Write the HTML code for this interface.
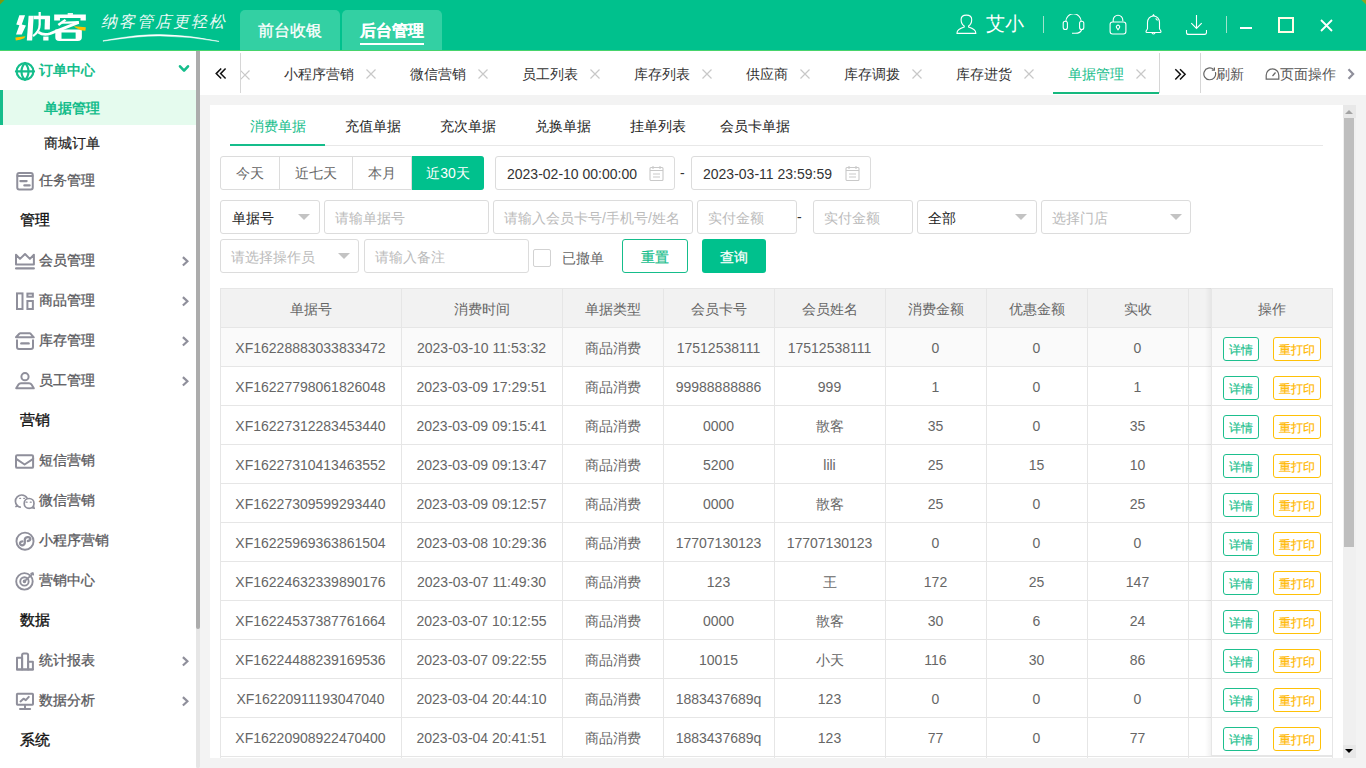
<!DOCTYPE html><html><head><meta charset="utf-8"><style>
*{margin:0;padding:0;box-sizing:border-box}
html,body{width:1366px;height:768px;overflow:hidden;background:#f3f3f3;font-family:"Liberation Sans",sans-serif;font-size:14px;color:#333}
.a{position:absolute}
.hdr{left:0;top:0;width:1366px;height:51px;background:#00C18D}
.hline{left:0;top:50px;width:1366px;height:1px;background:#48D46C}
.ttab{top:10px;height:40px;width:100px;background:#33D0A3;border-radius:5px 5px 0 0;color:#fff;font-size:16px;line-height:41px;text-align:center;-webkit-text-stroke:.3px #fff}
.side{left:0;top:51px;width:196px;height:717px;background:#fff}
.sbar{left:196px;top:51px;width:4px;height:717px;background:#e6e6e6;border-radius:2px}
.si{left:39px;font-size:14px;font-weight:500;-webkit-text-stroke:.3px currentColor;color:#5a5a5e;line-height:20px;height:20px}
.sh{left:20px;font-size:15px;font-weight:500;color:#111;-webkit-text-stroke:.35px #111;line-height:20px;height:20px}
.ico{left:15px;width:20px;height:20px}
.chev{left:180px;width:10px;height:12px}
.tabbar{left:200px;top:51px;width:1166px;height:44px;background:#fff}
.tt{top:63.5px;line-height:20px;font-size:14px;color:#333;white-space:nowrap}
.tx{top:69px;width:10px;height:10px}
.card{left:210px;top:105px;width:1133px;height:653px;background:#fff}
.st{top:116px;line-height:20px;font-size:14px;color:#333}
.inp{border:1px solid #dcdcdc;border-radius:3px;background:#fff;height:34px;line-height:34px;font-size:14px;color:#bbb;padding-left:10px;white-space:nowrap;overflow:hidden}
.caret{width:0;height:0;border-left:6px solid transparent;border-right:6px solid transparent;border-top:6px solid #c3c3c3}
.tbl{left:220px;top:288px;width:1113px;border-top:1px solid #e6e6e6}
.cell{height:39px;line-height:38px;text-align:center;font-size:14px;color:#666;border-right:1px solid #e6e6e6;border-bottom:1px solid #e6e6e6;white-space:nowrap;overflow:hidden}
.btn1{width:36px;height:24px;border:1px solid #1DBF8E;color:#1DBF8E;border-radius:3px;font-size:12px;line-height:24px;text-align:center;background:#fff;-webkit-text-stroke:.2px #1DBF8E}
.btn2{width:48px;height:24px;border:1px solid #FFC107;color:#FFB800;border-radius:3px;font-size:12px;line-height:24px;text-align:center;background:#fff;-webkit-text-stroke:.2px #FFB800}
</style></head><body>
<div class="a hdr"></div><div class="a hline"></div>
<svg class="a" style="left:10px;top:8px" width="85" height="38" viewBox="0 0 1366 611">
<g fill="#fff">
<polygon points="150,117 242,117 189,267 256,281 189,427 96,427 150,277 100,267"/>
<polygon points="299,124 381,124 356,523 270,523"/>
<polygon points="381,124 640,124 640,181 381,181"/>
<polygon points="562,131 644,131 640,345 555,345"/>
<polygon points="534,459 619,459 619,523 534,523"/>
<polygon points="927,82 1012,82 1012,110 927,110"/>
<polygon points="710,103 1219,103 1219,199 1133,199 1133,160 803,160 803,199 710,199"/>
<polygon points="764,256 880,176 905,200 790,290"/>
<polygon points="830,221 1105,208 1105,250 830,252"/>
<path d="M728 345 H1155 V470 Q1155 530 1090 530 H790 Q728 530 728 470 Z M828 395 V494 H1055 V395 Z" fill-rule="evenodd"/>
</g>
<path d="M477 64 V267 Q477 380 370 452" stroke="#fff" stroke-width="36" fill="none"/>
<path d="M455 388 Q540 450 650 410 Q850 330 1105 231" stroke="#fff" stroke-width="44" fill="none"/>
<path d="M86 473 L249 455 L228 487 Q160 520 93 523 Z" fill="#FFC000"/>
<path d="M1027 295 L1126 302 L1219 309 L1212 366 L1140 359 L1055 317 Z" fill="#FFC000"/>
</svg>
<div class="a" style="left:101px;top:12px;font-size:16px;font-family:'Liberation Serif',serif;font-style:italic;color:#fff;line-height:20px;letter-spacing:2px;opacity:.92">纳客管店更轻松</div>
<svg class="a" style="left:100px;top:31px" width="125" height="12"><path d="M3 9.7 Q40 3 60 3.6 Q90 4 119 10.3 L119 10.5 Q90 5.2 60 4.9 Q40 4.6 3 10.2 Z" fill="#fff" stroke="#fff" stroke-width=".5"/></svg>
<div class="a ttab" style="left:240px">前台收银</div>
<div class="a ttab" style="left:342px;font-weight:bold;-webkit-text-stroke:.1px #fff">后台管理</div>
<div class="a" style="left:360px;top:43px;width:64px;height:2px;background:#fff"></div>
<svg class="a" style="left:950px;top:10px" width="30" height="26" viewBox="0 0 30 26" fill="none" stroke="#fff" stroke-width="1.1"><path d="M14.2 16C11.8 14.6 11.1 11.8 11.1 9.6 11.1 6.6 13.2 5.1 16.4 5.1s5.3 1.5 5.3 4.5c0 2.2-.7 5-3.1 6.4v1.1c3.5 1.1 7.2 2.6 7.2 5.9v.4H7v-.4c0-3.3 3.7-4.8 7.2-5.9z"/></svg>
<div class="a" style="left:986px;top:13px;font-size:19px;color:#fff;line-height:22px">艾小</div>
<div class="a" style="left:1043px;top:16px;width:1px;height:17px;background:#9fe3cc"></div>
<svg class="a" style="left:1062px;top:14px" width="23" height="21" viewBox="0 0 23 21" fill="none" stroke="#fff" stroke-width="1.1"><path d="M3.8 7.5a7.7 7.7 0 0 1 15.4 0"/><rect x="1.2" y="7.2" width="4.2" height="8.3" rx="2"/><rect x="17.6" y="7.2" width="4.2" height="8.3" rx="2"/><path d="M19.7 15.5c-.6 2.3-3.2 3.8-6.5 3.8H10"/></svg>
<svg class="a" style="left:1109px;top:14px" width="18" height="21" viewBox="0 0 18 21" fill="none" stroke="#fff" stroke-width="1.1"><path d="M4.2 8V6a4.8 4.8 0 0 1 9.6 0v1.2"/><rect x="1.1" y="8" width="15.8" height="12" rx="2.5"/><path d="M9 15.8l-1.4-2a1.7 1.7 0 1 1 2.8 0z"/></svg>
<svg class="a" style="left:1145px;top:14px" width="17" height="21" viewBox="0 0 17 21" fill="none" stroke="#fff" stroke-width="1.1"><path d="M8.5 2C5 2 2.5 4.8 2.5 8.5v6c0 1-1.5 2-1.5 3 0 .7.4 1 1 1h13c.6 0 1-.3 1-1 0-1-1.5-2-1.5-3v-6C14.5 4.8 12 2 8.5 2z"/><path d="M7.6 1.9l.9-1.1.9 1.1"/><path d="M7 18.5a1.5 1.5 0 0 0 3 0"/><path d="M10.6 4.4c.9.5 1.5 1.2 1.9 2.1"/></svg>
<svg class="a" style="left:1185px;top:14px" width="22" height="22" viewBox="0 0 22 22" fill="none" stroke="#fff" stroke-width="1.1"><path d="M11.5 1v13.5M6.3 9.2l5.2 5.3 5.2-5.3"/><path d="M1.5 16v2.4c0 1.3.8 2 2 2h16c1.2 0 2-.7 2-2V16"/></svg>
<div class="a" style="left:1226px;top:16px;width:1px;height:17px;background:#9fe3cc"></div>
<div class="a" style="left:1240px;top:27px;width:12px;height:2px;background:#fff"></div>
<div class="a" style="left:1278px;top:17px;width:16px;height:16px;border:2px solid #fffde6"></div>
<svg class="a" style="left:1320px;top:19px" width="13" height="13" viewBox="0 0 13 13" stroke="#fff" stroke-width="1.8"><path d="M1 1l11 11M12 1L1 12"/></svg>
<svg class="a" style="left:0;top:0" width="5" height="5"><path d="M0 0H4.5L0 4.5Z" fill="#7a9a10"/></svg><svg class="a" style="left:1361px;top:0" width="5" height="5"><path d="M0.5 0H5V4.5Z" fill="#8aa520"/></svg>
<div class="a side"></div><div class="a sbar"></div><div class="a" style="left:196px;top:51px;width:4px;height:578px;background:#acacac;border-radius:0 0 2px 2px"></div>
<svg class="a" style="left:10px;top:55px" width="30" height="30" viewBox="0 0 30 30" fill="none" stroke="#15BD8B" stroke-width="2.2" stroke-linejoin="round" stroke-linecap="round"><circle cx="15" cy="16.4" r="8.35"/><path d="M6 16.4h18"/><path d="M15 8c-2.5 2.5-3.5 5.5-3.5 8.4s1 5.9 3.5 8.4M15 8c2.5 2.5 3.5 5.5 3.5 8.4s-1 5.9-3.5 8.4"/></svg>
<div class="a si" style="top:60px;color:#15BD8B;font-weight:bold;-webkit-text-stroke:0">订单中心</div>
<svg class="a" style="left:170px;top:55px" width="30" height="30" viewBox="0 0 30 30" fill="none" stroke="#15BD8B" stroke-width="2.6" stroke-linecap="round" stroke-linejoin="round"><path d="M10 11.3l4.06 4.3 3.94-4.3"/></svg>
<div class="a" style="left:0;top:90px;width:196px;height:35px;background:#e5fbee"></div>
<div class="a" style="left:0;top:90px;width:3px;height:35px;background:#15BD8B"></div>
<div class="a si" style="left:44px;top:98px;color:#15BD8B;font-weight:bold;-webkit-text-stroke:0">单据管理</div>
<div class="a si" style="left:44px;top:133px;color:#222;-webkit-text-stroke:.2px #222">商城订单</div>
<svg class="a" style="left:10px;top:165px" width="30" height="30" viewBox="0 0 30 30" fill="none" stroke="#8f8f9b" stroke-width="2" stroke-linejoin="round" stroke-linecap="round"><rect x="7.26" y="7.9" width="15.5" height="16.5" rx="2"/><path d="M7.5 10.9h15"/><path d="M10.4 16.1h6.2M14.4 20.4h5.2" stroke-width="2.3"/></svg>
<div class="a si" style="top:170px">任务管理</div>
<div class="a sh" style="top:210px">管理</div>
<svg class="a" style="left:10px;top:245px" width="30" height="30" viewBox="0 0 30 30" fill="none" stroke="#8f8f9b" stroke-width="2" stroke-linejoin="round" stroke-linecap="round"><path d="M6 19.4V9.8l4 4.1 5-4.9 4.9 4.9 4-4.1v9.6z"/><path d="M6.1 23.4h17.7" stroke-width="2.3"/></svg>
<div class="a si" style="top:250px">会员管理</div>
<svg class="a" style="left:170px;top:245px" width="30" height="30" viewBox="0 0 30 30" fill="none" stroke="#8f8f9b" stroke-width="2.2"><path d="M12.9 12.1l4.5 4.2-4.5 4.2"/></svg>
<svg class="a" style="left:10px;top:285px" width="30" height="30" viewBox="0 0 30 30" fill="none" stroke="#8f8f9b" stroke-width="2" stroke-linejoin="round" stroke-linecap="round"><rect x="7" y="8.4" width="5.5" height="15.6" stroke-linejoin="miter"/><rect x="17.4" y="8.6" width="5.45" height="3.1" stroke-linejoin="miter"/><rect x="17.4" y="16" width="5.45" height="8" stroke-linejoin="miter"/></svg>
<div class="a si" style="top:290px">商品管理</div>
<svg class="a" style="left:170px;top:285px" width="30" height="30" viewBox="0 0 30 30" fill="none" stroke="#8f8f9b" stroke-width="2.2"><path d="M12.9 12.1l4.5 4.2-4.5 4.2"/></svg>
<svg class="a" style="left:10px;top:325px" width="30" height="30" viewBox="0 0 30 30" fill="none" stroke="#8f8f9b" stroke-width="2" stroke-linejoin="round" stroke-linecap="round"><path d="M6 12.3l3.3-3.5c.3-.3.6-.5 1-.5h9.4c.4 0 .7.2 1 .5l3.1 3.5z"/><path d="M7 15.2V22a2 2 0 0 0 2 2h12a2 2 0 0 0 2-2v-6.8"/><path d="M11.4 18.4h7.2" stroke-width="2.4"/></svg>
<div class="a si" style="top:330px">库存管理</div>
<svg class="a" style="left:170px;top:325px" width="30" height="30" viewBox="0 0 30 30" fill="none" stroke="#8f8f9b" stroke-width="2.2"><path d="M12.9 12.1l4.5 4.2-4.5 4.2"/></svg>
<svg class="a" style="left:10px;top:365px" width="30" height="30" viewBox="0 0 30 30" fill="none" stroke="#8f8f9b" stroke-width="2" stroke-linejoin="round" stroke-linecap="round"><circle cx="15" cy="11.7" r="3.6"/><path d="M6.2 23.3l2.3-3.8c.8-1.3 1.7-1.3 2.5-1.3h8c.8 0 1.7 0 2.5 1.3l2.3 3.8z"/></svg>
<div class="a si" style="top:370px">员工管理</div>
<svg class="a" style="left:170px;top:365px" width="30" height="30" viewBox="0 0 30 30" fill="none" stroke="#8f8f9b" stroke-width="2.2"><path d="M12.9 12.1l4.5 4.2-4.5 4.2"/></svg>
<div class="a sh" style="top:410px">营销</div>
<svg class="a" style="left:10px;top:445px" width="30" height="30" viewBox="0 0 30 30" fill="none" stroke="#8f8f9b" stroke-width="2" stroke-linejoin="round" stroke-linecap="round"><rect x="6" y="10.35" width="17.1" height="12.5" rx="1.2"/><path d="M6.2 13.9l8.4 5.6 8.6-5.6"/></svg>
<div class="a si" style="top:450px">短信营销</div>
<svg class="a" style="left:10px;top:485px" width="30" height="30" viewBox="0 0 30 30" fill="none" stroke="#8f8f9b" stroke-width="2" stroke-linejoin="round" stroke-linecap="round"><path d="M7.4 20.9c-1.3-1.1-2-2.7-2-4.6 0-3.4 2.8-6.3 6.3-6.3 2.4 0 4.4 1.3 5.4 3.2" stroke-width="1.7"/><path d="M6 21.5l1.6-.9M7.4 20.9c.8.6 1.5 1 2.8 1.2" stroke-width="1.7"/><circle cx="19.1" cy="18.4" r="4.9" stroke-width="1.7"/><path d="M23.5 21.2l.8 2.2-2.2-.6" stroke-width="1.5"/><path d="M9.7 13.3h.9M13.7 13.3h.9M16.2 17.2h.9M20.3 17.2h.9" stroke-width="1.3"/></svg>
<div class="a si" style="top:490px">微信营销</div>
<svg class="a" style="left:10px;top:525px" width="30" height="30" viewBox="0 0 30 30" fill="none" stroke="#8f8f9b" stroke-width="2" stroke-linejoin="round" stroke-linecap="round"><circle cx="15" cy="16.2" r="8.55" stroke-width="1.9"/><path d="M17.8 16c1.8-.2 2.8-1.2 2.5-2.4-.3-1.2-1.5-1.7-2.8-1.5-1.7.3-2.7 1.4-2.7 2.9v2.8c0 1.6-1.4 2.7-2.9 2.5-1.3-.2-2.1-1.2-1.9-2.3.2-1 1-1.6 2.2-1.7" stroke-width="2.3"/></svg>
<div class="a si" style="top:530px">小程序营销</div>
<svg class="a" style="left:10px;top:565px" width="30" height="30" viewBox="0 0 30 30" fill="none" stroke="#8f8f9b" stroke-width="2" stroke-linejoin="round" stroke-linecap="round"><circle cx="14.45" cy="16.4" r="8.25" stroke-width="1.9"/><circle cx="14.45" cy="16.4" r="4.2" stroke-width="1.9"/><circle cx="14.45" cy="16.4" r="1.1" fill="#8f8f9b" stroke-width="1.4"/><path d="M14.45 16.4l7.4-6.8" stroke-width="1.8"/><path d="M21.2 8.6l1.6-.6.4 1.6" stroke-width="1.8"/></svg>
<div class="a si" style="top:570px">营销中心</div>
<div class="a sh" style="top:610px">数据</div>
<svg class="a" style="left:10px;top:645px" width="30" height="30" viewBox="0 0 30 30" fill="none" stroke="#8f8f9b" stroke-width="2" stroke-linejoin="round" stroke-linecap="round"><path d="M7 24.4V12.7h5.1v11.7z"/><path d="M12.1 24.4V10c0-.9.7-1.6 1.6-1.6h2.8c.9 0 1.6.7 1.6 1.6v14.4z"/><path d="M18.1 24.4v-7.6h4.8v7.6z"/><path d="M7 24.4h15.9"/></svg>
<div class="a si" style="top:650px">统计报表</div>
<svg class="a" style="left:170px;top:645px" width="30" height="30" viewBox="0 0 30 30" fill="none" stroke="#8f8f9b" stroke-width="2.2"><path d="M12.9 12.1l4.5 4.2-4.5 4.2"/></svg>
<svg class="a" style="left:10px;top:685px" width="30" height="30" viewBox="0 0 30 30" fill="none" stroke="#8f8f9b" stroke-width="2" stroke-linejoin="round" stroke-linecap="round"><rect x="6.9" y="8.8" width="16.1" height="10.9" rx=".6"/><path d="M15 20.7v3M10 24h10.1"/><path d="M10.5 16.4l3-2.7 2.3 1.5 3-3.3"/></svg>
<div class="a si" style="top:690px">数据分析</div>
<svg class="a" style="left:170px;top:685px" width="30" height="30" viewBox="0 0 30 30" fill="none" stroke="#8f8f9b" stroke-width="2.2"><path d="M12.9 12.1l4.5 4.2-4.5 4.2"/></svg>
<div class="a sh" style="top:730px">系统</div>
<div class="a tabbar"></div>
<svg class="a" style="left:214px;top:67px" width="14" height="14" viewBox="0 0 14 14" fill="none" stroke="#111" stroke-width="1.5"><path d="M7.2 1.5L2.2 6.6l5 4.9M11.6 1.5L6.6 6.6l5 4.9"/></svg>
<div class="a" style="left:240px;top:53px;width:1px;height:40px;background:#d6d6d6"></div>
<div class="a" style="left:241px;top:60px;width:12px;height:28px;overflow:hidden"><svg style="position:absolute;left:-1px;top:10px" width="10" height="10" viewBox="0 0 10 10" stroke="#c8c8c8" stroke-width="1.2"><path d="M.5 .5l9 9M9.5 .5l-9 9"/></svg></div>
<div class="a tt" style="left:284px;color:#333">小程序营销</div>
<svg class="a tx" style="left:366px" width="10" height="10" viewBox="0 0 10 10" stroke="#c8c8c8" stroke-width="1.2"><path d="M.5 .5l9 9M9.5 .5l-9 9"/></svg>
<div class="a tt" style="left:410px;color:#333">微信营销</div>
<svg class="a tx" style="left:478px" width="10" height="10" viewBox="0 0 10 10" stroke="#c8c8c8" stroke-width="1.2"><path d="M.5 .5l9 9M9.5 .5l-9 9"/></svg>
<div class="a tt" style="left:522px;color:#333">员工列表</div>
<svg class="a tx" style="left:590px" width="10" height="10" viewBox="0 0 10 10" stroke="#c8c8c8" stroke-width="1.2"><path d="M.5 .5l9 9M9.5 .5l-9 9"/></svg>
<div class="a tt" style="left:634px;color:#333">库存列表</div>
<svg class="a tx" style="left:702px" width="10" height="10" viewBox="0 0 10 10" stroke="#c8c8c8" stroke-width="1.2"><path d="M.5 .5l9 9M9.5 .5l-9 9"/></svg>
<div class="a tt" style="left:746px;color:#333">供应商</div>
<svg class="a tx" style="left:800px" width="10" height="10" viewBox="0 0 10 10" stroke="#c8c8c8" stroke-width="1.2"><path d="M.5 .5l9 9M9.5 .5l-9 9"/></svg>
<div class="a tt" style="left:844px;color:#333">库存调拨</div>
<svg class="a tx" style="left:912px" width="10" height="10" viewBox="0 0 10 10" stroke="#c8c8c8" stroke-width="1.2"><path d="M.5 .5l9 9M9.5 .5l-9 9"/></svg>
<div class="a tt" style="left:956px;color:#333">库存进货</div>
<svg class="a tx" style="left:1024px" width="10" height="10" viewBox="0 0 10 10" stroke="#c8c8c8" stroke-width="1.2"><path d="M.5 .5l9 9M9.5 .5l-9 9"/></svg>
<div class="a tt" style="left:1068px;color:#15BD8B">单据管理</div>
<svg class="a tx" style="left:1136px" width="10" height="10" viewBox="0 0 10 10" stroke="#c8c8c8" stroke-width="1.2"><path d="M.5 .5l9 9M9.5 .5l-9 9"/></svg>
<div class="a" style="left:1053px;top:92px;width:106px;height:2px;background:#15B87E"></div>
<div class="a" style="left:1159px;top:53px;width:1px;height:40px;background:#d6d6d6"></div>
<svg class="a" style="left:1174px;top:67px" width="14" height="14" viewBox="0 0 14 14" fill="none" stroke="#111" stroke-width="1.5"><path d="M1.3 2.2l5.1 5.1-5.1 5.2M6 2.2l5.1 5.1-5.1 5.2"/></svg>
<div class="a" style="left:1200px;top:53px;width:1px;height:40px;background:#d6d6d6"></div>
<svg class="a" style="left:1203px;top:67px" width="15" height="14" viewBox="0 0 15 14" fill="none" stroke="#666" stroke-width="1.2"><path d="M12.4 5.2A5.9 5.9 0 1 1 10.6 2.4"/><path d="M11.4 .6v2.5H8.8"/></svg>
<div class="a tt" style="left:1216px;color:#555">刷新</div>
<svg class="a" style="left:1265px;top:67px" width="15" height="13" viewBox="0 0 15 13" fill="none" stroke="#666" stroke-width="1.2"><path d="M1.2 12.2v-4a6.3 6.3 0 0 1 12.6 0v4z"/><path d="M7.5 9l3-3.5"/></svg>
<div class="a tt" style="left:1280px;color:#555">页面操作</div>
<svg class="a" style="left:1347px;top:68px" width="8" height="12" viewBox="0 0 8 12" fill="none" stroke="#8f8f9b" stroke-width="2.2"><path d="M1.5 1.2l4.6 4.8-4.6 4.8"/></svg>
<div class="a card"></div>
<div class="a st" style="left:250px;color:#15BD8B">消费单据</div>
<div class="a st" style="left:345px;color:#1e1e1e">充值单据</div>
<div class="a st" style="left:440px;color:#1e1e1e">充次单据</div>
<div class="a st" style="left:535px;color:#1e1e1e">兑换单据</div>
<div class="a st" style="left:630px;color:#1e1e1e">挂单列表</div>
<div class="a st" style="left:720px;color:#1e1e1e">会员卡单据</div>
<div class="a" style="left:230px;top:145px;width:1093px;height:1px;background:#e8e8e8"></div>
<div class="a" style="left:230px;top:144px;width:95px;height:2px;background:#15BD8B"></div>
<div class="a" style="left:220px;top:156px;width:264px;height:34px;border:1px solid #dcdcdc;border-radius:3px;background:#fff"></div>
<div class="a" style="left:279px;top:157px;width:1px;height:32px;background:#dcdcdc"></div>
<div class="a" style="left:352px;top:157px;width:1px;height:32px;background:#dcdcdc"></div>
<div class="a" style="left:411px;top:157px;width:1px;height:32px;background:#dcdcdc"></div>
<div class="a" style="left:412px;top:156px;width:72px;height:34px;background:#00C18D;border-radius:0 3px 3px 0"></div>
<div class="a" style="left:220px;top:156px;width:59px;height:34px;line-height:34px;text-align:center;font-size:14px;color:#666">今天</div>
<div class="a" style="left:280px;top:156px;width:72px;height:34px;line-height:34px;text-align:center;font-size:14px;color:#666">近七天</div>
<div class="a" style="left:353px;top:156px;width:58px;height:34px;line-height:34px;text-align:center;font-size:14px;color:#666">本月</div>
<div class="a" style="left:412px;top:156px;width:72px;height:34px;line-height:34px;text-align:center;font-size:14px;color:#fff">近30天</div>
<div class="a inp" style="left:495px;top:156px;width:180px;color:#333;padding-left:11px">2023-02-10 00:00:00</div>
<svg class="a" style="left:649px;top:165px" width="15" height="16" viewBox="0 0 15 16" fill="none" stroke="#c9c9c9" stroke-width="1.1"><rect x="1" y="2.5" width="13" height="13" rx="1"/><path d="M4 1v3M11 1v3M1 5.5h13M4 9h7M4 12h7"/></svg>
<div class="a" style="left:680px;top:163px;font-size:14px;line-height:20px;color:#333">-</div>
<div class="a inp" style="left:691px;top:156px;width:180px;color:#333;padding-left:11px">2023-03-11 23:59:59</div>
<svg class="a" style="left:845px;top:165px" width="15" height="16" viewBox="0 0 15 16" fill="none" stroke="#c9c9c9" stroke-width="1.1"><rect x="1" y="2.5" width="13" height="13" rx="1"/><path d="M4 1v3M11 1v3M1 5.5h13M4 9h7M4 12h7"/></svg>
<div class="a inp" style="left:220px;top:200px;width:100px;color:#222;padding-left:11px">单据号</div>
<div class="a caret" style="left:298px;top:214px"></div>
<div class="a inp" style="left:324px;top:200px;width:165px">请输单据号</div>
<div class="a inp" style="left:493px;top:200px;width:200px">请输入会员卡号/手机号/姓名</div>
<div class="a inp" style="left:697px;top:200px;width:100px">实付金额</div>
<div class="a" style="left:797px;top:207px;font-size:14px;line-height:20px;color:#333">-</div>
<div class="a inp" style="left:813px;top:200px;width:100px">实付金额</div>
<div class="a inp" style="left:917px;top:200px;width:120px;color:#222">全部</div>
<div class="a caret" style="left:1015px;top:214px"></div>
<div class="a inp" style="left:1041px;top:200px;width:150px">选择门店</div>
<div class="a caret" style="left:1170px;top:214px"></div>
<div class="a inp" style="left:220px;top:239px;width:139px">请选择操作员</div>
<div class="a caret" style="left:338px;top:253px"></div>
<div class="a inp" style="left:364px;top:239px;width:165px">请输入备注</div>
<div class="a" style="left:533px;top:249px;width:18px;height:18px;border:1px solid #d2d2d2;border-radius:2px;background:#fff"></div>
<div class="a" style="left:562px;top:248px;font-size:14px;line-height:20px;color:#666">已撤单</div>
<div class="a" style="left:622px;top:239px;width:66px;height:34px;border:1px solid #15BD8B;border-radius:3px;color:#15BD8B;line-height:34px;text-align:center;font-size:14px;-webkit-text-stroke:.2px #15BD8B">重置</div>
<div class="a" style="left:702px;top:239px;width:64px;height:34px;background:#00C18D;border-radius:3px;color:#fff;line-height:36px;text-align:center;font-size:14px;font-weight:500;-webkit-text-stroke:.25px #fff">查询</div>
<div class="a" style="left:220px;top:288px;width:1113px;height:39px;background:#f2f2f2"></div>
<div class="a" style="left:220px;top:327px;width:1113px;height:39px;background:#fafafa"></div>
<div class="a" style="left:220px;top:288px;width:1113px;height:1px;background:#e6e6e6"></div>
<div class="a" style="left:220px;top:327px;width:1113px;height:1px;background:#e6e6e6"></div>
<div class="a" style="left:220px;top:366px;width:1113px;height:1px;background:#e6e6e6"></div>
<div class="a" style="left:220px;top:405px;width:1113px;height:1px;background:#e6e6e6"></div>
<div class="a" style="left:220px;top:444px;width:1113px;height:1px;background:#e6e6e6"></div>
<div class="a" style="left:220px;top:483px;width:1113px;height:1px;background:#e6e6e6"></div>
<div class="a" style="left:220px;top:522px;width:1113px;height:1px;background:#e6e6e6"></div>
<div class="a" style="left:220px;top:561px;width:1113px;height:1px;background:#e6e6e6"></div>
<div class="a" style="left:220px;top:600px;width:1113px;height:1px;background:#e6e6e6"></div>
<div class="a" style="left:220px;top:639px;width:1113px;height:1px;background:#e6e6e6"></div>
<div class="a" style="left:220px;top:678px;width:1113px;height:1px;background:#e6e6e6"></div>
<div class="a" style="left:220px;top:717px;width:1113px;height:1px;background:#e6e6e6"></div>
<div class="a" style="left:220px;top:756px;width:1113px;height:1px;background:#e6e6e6"></div>
<div class="a" style="left:220px;top:288px;width:1px;height:470px;background:#e6e6e6"></div>
<div class="a" style="left:401px;top:288px;width:1px;height:470px;background:#e6e6e6"></div>
<div class="a" style="left:562px;top:288px;width:1px;height:470px;background:#e6e6e6"></div>
<div class="a" style="left:663px;top:288px;width:1px;height:470px;background:#e6e6e6"></div>
<div class="a" style="left:774px;top:288px;width:1px;height:470px;background:#e6e6e6"></div>
<div class="a" style="left:885px;top:288px;width:1px;height:470px;background:#e6e6e6"></div>
<div class="a" style="left:986px;top:288px;width:1px;height:470px;background:#e6e6e6"></div>
<div class="a" style="left:1087px;top:288px;width:1px;height:470px;background:#e6e6e6"></div>
<div class="a" style="left:1188px;top:288px;width:1px;height:470px;background:#e6e6e6"></div>
<div class="a" style="left:1332px;top:288px;width:1px;height:470px;background:#e6e6e6"></div>
<div class="a" style="left:220px;top:290px;width:181px;height:39px;line-height:39px;text-align:center;font-size:14px;color:#666;white-space:nowrap">单据号</div>
<div class="a" style="left:401px;top:290px;width:161px;height:39px;line-height:39px;text-align:center;font-size:14px;color:#666;white-space:nowrap">消费时间</div>
<div class="a" style="left:562px;top:290px;width:101px;height:39px;line-height:39px;text-align:center;font-size:14px;color:#666;white-space:nowrap">单据类型</div>
<div class="a" style="left:663px;top:290px;width:111px;height:39px;line-height:39px;text-align:center;font-size:14px;color:#666;white-space:nowrap">会员卡号</div>
<div class="a" style="left:774px;top:290px;width:111px;height:39px;line-height:39px;text-align:center;font-size:14px;color:#666;white-space:nowrap">会员姓名</div>
<div class="a" style="left:885px;top:290px;width:101px;height:39px;line-height:39px;text-align:center;font-size:14px;color:#666;white-space:nowrap">消费金额</div>
<div class="a" style="left:986px;top:290px;width:101px;height:39px;line-height:39px;text-align:center;font-size:14px;color:#666;white-space:nowrap">优惠金额</div>
<div class="a" style="left:1087px;top:290px;width:101px;height:39px;line-height:39px;text-align:center;font-size:14px;color:#666;white-space:nowrap">实收</div>
<div class="a" style="left:220px;top:329px;width:181px;height:39px;line-height:39px;text-align:center;font-size:14px;color:#666;white-space:nowrap">XF16228883033833472</div>
<div class="a" style="left:401px;top:329px;width:161px;height:39px;line-height:39px;text-align:center;font-size:14px;color:#666;white-space:nowrap">2023-03-10 11:53:32</div>
<div class="a" style="left:562px;top:329px;width:101px;height:39px;line-height:39px;text-align:center;font-size:14px;color:#666;white-space:nowrap">商品消费</div>
<div class="a" style="left:663px;top:329px;width:111px;height:39px;line-height:39px;text-align:center;font-size:14px;color:#666;white-space:nowrap">17512538111</div>
<div class="a" style="left:774px;top:329px;width:111px;height:39px;line-height:39px;text-align:center;font-size:14px;color:#666;white-space:nowrap">17512538111</div>
<div class="a" style="left:885px;top:329px;width:101px;height:39px;line-height:39px;text-align:center;font-size:14px;color:#666;white-space:nowrap">0</div>
<div class="a" style="left:986px;top:329px;width:101px;height:39px;line-height:39px;text-align:center;font-size:14px;color:#666;white-space:nowrap">0</div>
<div class="a" style="left:1087px;top:329px;width:101px;height:39px;line-height:39px;text-align:center;font-size:14px;color:#666;white-space:nowrap">0</div>
<div class="a" style="left:220px;top:368px;width:181px;height:39px;line-height:39px;text-align:center;font-size:14px;color:#666;white-space:nowrap">XF16227798061826048</div>
<div class="a" style="left:401px;top:368px;width:161px;height:39px;line-height:39px;text-align:center;font-size:14px;color:#666;white-space:nowrap">2023-03-09 17:29:51</div>
<div class="a" style="left:562px;top:368px;width:101px;height:39px;line-height:39px;text-align:center;font-size:14px;color:#666;white-space:nowrap">商品消费</div>
<div class="a" style="left:663px;top:368px;width:111px;height:39px;line-height:39px;text-align:center;font-size:14px;color:#666;white-space:nowrap">99988888886</div>
<div class="a" style="left:774px;top:368px;width:111px;height:39px;line-height:39px;text-align:center;font-size:14px;color:#666;white-space:nowrap">999</div>
<div class="a" style="left:885px;top:368px;width:101px;height:39px;line-height:39px;text-align:center;font-size:14px;color:#666;white-space:nowrap">1</div>
<div class="a" style="left:986px;top:368px;width:101px;height:39px;line-height:39px;text-align:center;font-size:14px;color:#666;white-space:nowrap">0</div>
<div class="a" style="left:1087px;top:368px;width:101px;height:39px;line-height:39px;text-align:center;font-size:14px;color:#666;white-space:nowrap">1</div>
<div class="a" style="left:220px;top:407px;width:181px;height:39px;line-height:39px;text-align:center;font-size:14px;color:#666;white-space:nowrap">XF16227312283453440</div>
<div class="a" style="left:401px;top:407px;width:161px;height:39px;line-height:39px;text-align:center;font-size:14px;color:#666;white-space:nowrap">2023-03-09 09:15:41</div>
<div class="a" style="left:562px;top:407px;width:101px;height:39px;line-height:39px;text-align:center;font-size:14px;color:#666;white-space:nowrap">商品消费</div>
<div class="a" style="left:663px;top:407px;width:111px;height:39px;line-height:39px;text-align:center;font-size:14px;color:#666;white-space:nowrap">0000</div>
<div class="a" style="left:774px;top:407px;width:111px;height:39px;line-height:39px;text-align:center;font-size:14px;color:#666;white-space:nowrap">散客</div>
<div class="a" style="left:885px;top:407px;width:101px;height:39px;line-height:39px;text-align:center;font-size:14px;color:#666;white-space:nowrap">35</div>
<div class="a" style="left:986px;top:407px;width:101px;height:39px;line-height:39px;text-align:center;font-size:14px;color:#666;white-space:nowrap">0</div>
<div class="a" style="left:1087px;top:407px;width:101px;height:39px;line-height:39px;text-align:center;font-size:14px;color:#666;white-space:nowrap">35</div>
<div class="a" style="left:220px;top:446px;width:181px;height:39px;line-height:39px;text-align:center;font-size:14px;color:#666;white-space:nowrap">XF16227310413463552</div>
<div class="a" style="left:401px;top:446px;width:161px;height:39px;line-height:39px;text-align:center;font-size:14px;color:#666;white-space:nowrap">2023-03-09 09:13:47</div>
<div class="a" style="left:562px;top:446px;width:101px;height:39px;line-height:39px;text-align:center;font-size:14px;color:#666;white-space:nowrap">商品消费</div>
<div class="a" style="left:663px;top:446px;width:111px;height:39px;line-height:39px;text-align:center;font-size:14px;color:#666;white-space:nowrap">5200</div>
<div class="a" style="left:774px;top:446px;width:111px;height:39px;line-height:39px;text-align:center;font-size:14px;color:#666;white-space:nowrap">lili</div>
<div class="a" style="left:885px;top:446px;width:101px;height:39px;line-height:39px;text-align:center;font-size:14px;color:#666;white-space:nowrap">25</div>
<div class="a" style="left:986px;top:446px;width:101px;height:39px;line-height:39px;text-align:center;font-size:14px;color:#666;white-space:nowrap">15</div>
<div class="a" style="left:1087px;top:446px;width:101px;height:39px;line-height:39px;text-align:center;font-size:14px;color:#666;white-space:nowrap">10</div>
<div class="a" style="left:220px;top:485px;width:181px;height:39px;line-height:39px;text-align:center;font-size:14px;color:#666;white-space:nowrap">XF16227309599293440</div>
<div class="a" style="left:401px;top:485px;width:161px;height:39px;line-height:39px;text-align:center;font-size:14px;color:#666;white-space:nowrap">2023-03-09 09:12:57</div>
<div class="a" style="left:562px;top:485px;width:101px;height:39px;line-height:39px;text-align:center;font-size:14px;color:#666;white-space:nowrap">商品消费</div>
<div class="a" style="left:663px;top:485px;width:111px;height:39px;line-height:39px;text-align:center;font-size:14px;color:#666;white-space:nowrap">0000</div>
<div class="a" style="left:774px;top:485px;width:111px;height:39px;line-height:39px;text-align:center;font-size:14px;color:#666;white-space:nowrap">散客</div>
<div class="a" style="left:885px;top:485px;width:101px;height:39px;line-height:39px;text-align:center;font-size:14px;color:#666;white-space:nowrap">25</div>
<div class="a" style="left:986px;top:485px;width:101px;height:39px;line-height:39px;text-align:center;font-size:14px;color:#666;white-space:nowrap">0</div>
<div class="a" style="left:1087px;top:485px;width:101px;height:39px;line-height:39px;text-align:center;font-size:14px;color:#666;white-space:nowrap">25</div>
<div class="a" style="left:220px;top:524px;width:181px;height:39px;line-height:39px;text-align:center;font-size:14px;color:#666;white-space:nowrap">XF16225969363861504</div>
<div class="a" style="left:401px;top:524px;width:161px;height:39px;line-height:39px;text-align:center;font-size:14px;color:#666;white-space:nowrap">2023-03-08 10:29:36</div>
<div class="a" style="left:562px;top:524px;width:101px;height:39px;line-height:39px;text-align:center;font-size:14px;color:#666;white-space:nowrap">商品消费</div>
<div class="a" style="left:663px;top:524px;width:111px;height:39px;line-height:39px;text-align:center;font-size:14px;color:#666;white-space:nowrap">17707130123</div>
<div class="a" style="left:774px;top:524px;width:111px;height:39px;line-height:39px;text-align:center;font-size:14px;color:#666;white-space:nowrap">17707130123</div>
<div class="a" style="left:885px;top:524px;width:101px;height:39px;line-height:39px;text-align:center;font-size:14px;color:#666;white-space:nowrap">0</div>
<div class="a" style="left:986px;top:524px;width:101px;height:39px;line-height:39px;text-align:center;font-size:14px;color:#666;white-space:nowrap">0</div>
<div class="a" style="left:1087px;top:524px;width:101px;height:39px;line-height:39px;text-align:center;font-size:14px;color:#666;white-space:nowrap">0</div>
<div class="a" style="left:220px;top:563px;width:181px;height:39px;line-height:39px;text-align:center;font-size:14px;color:#666;white-space:nowrap">XF16224632339890176</div>
<div class="a" style="left:401px;top:563px;width:161px;height:39px;line-height:39px;text-align:center;font-size:14px;color:#666;white-space:nowrap">2023-03-07 11:49:30</div>
<div class="a" style="left:562px;top:563px;width:101px;height:39px;line-height:39px;text-align:center;font-size:14px;color:#666;white-space:nowrap">商品消费</div>
<div class="a" style="left:663px;top:563px;width:111px;height:39px;line-height:39px;text-align:center;font-size:14px;color:#666;white-space:nowrap">123</div>
<div class="a" style="left:774px;top:563px;width:111px;height:39px;line-height:39px;text-align:center;font-size:14px;color:#666;white-space:nowrap">王</div>
<div class="a" style="left:885px;top:563px;width:101px;height:39px;line-height:39px;text-align:center;font-size:14px;color:#666;white-space:nowrap">172</div>
<div class="a" style="left:986px;top:563px;width:101px;height:39px;line-height:39px;text-align:center;font-size:14px;color:#666;white-space:nowrap">25</div>
<div class="a" style="left:1087px;top:563px;width:101px;height:39px;line-height:39px;text-align:center;font-size:14px;color:#666;white-space:nowrap">147</div>
<div class="a" style="left:220px;top:602px;width:181px;height:39px;line-height:39px;text-align:center;font-size:14px;color:#666;white-space:nowrap">XF16224537387761664</div>
<div class="a" style="left:401px;top:602px;width:161px;height:39px;line-height:39px;text-align:center;font-size:14px;color:#666;white-space:nowrap">2023-03-07 10:12:55</div>
<div class="a" style="left:562px;top:602px;width:101px;height:39px;line-height:39px;text-align:center;font-size:14px;color:#666;white-space:nowrap">商品消费</div>
<div class="a" style="left:663px;top:602px;width:111px;height:39px;line-height:39px;text-align:center;font-size:14px;color:#666;white-space:nowrap">0000</div>
<div class="a" style="left:774px;top:602px;width:111px;height:39px;line-height:39px;text-align:center;font-size:14px;color:#666;white-space:nowrap">散客</div>
<div class="a" style="left:885px;top:602px;width:101px;height:39px;line-height:39px;text-align:center;font-size:14px;color:#666;white-space:nowrap">30</div>
<div class="a" style="left:986px;top:602px;width:101px;height:39px;line-height:39px;text-align:center;font-size:14px;color:#666;white-space:nowrap">6</div>
<div class="a" style="left:1087px;top:602px;width:101px;height:39px;line-height:39px;text-align:center;font-size:14px;color:#666;white-space:nowrap">24</div>
<div class="a" style="left:220px;top:641px;width:181px;height:39px;line-height:39px;text-align:center;font-size:14px;color:#666;white-space:nowrap">XF16224488239169536</div>
<div class="a" style="left:401px;top:641px;width:161px;height:39px;line-height:39px;text-align:center;font-size:14px;color:#666;white-space:nowrap">2023-03-07 09:22:55</div>
<div class="a" style="left:562px;top:641px;width:101px;height:39px;line-height:39px;text-align:center;font-size:14px;color:#666;white-space:nowrap">商品消费</div>
<div class="a" style="left:663px;top:641px;width:111px;height:39px;line-height:39px;text-align:center;font-size:14px;color:#666;white-space:nowrap">10015</div>
<div class="a" style="left:774px;top:641px;width:111px;height:39px;line-height:39px;text-align:center;font-size:14px;color:#666;white-space:nowrap">小天</div>
<div class="a" style="left:885px;top:641px;width:101px;height:39px;line-height:39px;text-align:center;font-size:14px;color:#666;white-space:nowrap">116</div>
<div class="a" style="left:986px;top:641px;width:101px;height:39px;line-height:39px;text-align:center;font-size:14px;color:#666;white-space:nowrap">30</div>
<div class="a" style="left:1087px;top:641px;width:101px;height:39px;line-height:39px;text-align:center;font-size:14px;color:#666;white-space:nowrap">86</div>
<div class="a" style="left:220px;top:680px;width:181px;height:39px;line-height:39px;text-align:center;font-size:14px;color:#666;white-space:nowrap">XF16220911193047040</div>
<div class="a" style="left:401px;top:680px;width:161px;height:39px;line-height:39px;text-align:center;font-size:14px;color:#666;white-space:nowrap">2023-03-04 20:44:10</div>
<div class="a" style="left:562px;top:680px;width:101px;height:39px;line-height:39px;text-align:center;font-size:14px;color:#666;white-space:nowrap">商品消费</div>
<div class="a" style="left:663px;top:680px;width:111px;height:39px;line-height:39px;text-align:center;font-size:14px;color:#666;white-space:nowrap">1883437689q</div>
<div class="a" style="left:774px;top:680px;width:111px;height:39px;line-height:39px;text-align:center;font-size:14px;color:#666;white-space:nowrap">123</div>
<div class="a" style="left:885px;top:680px;width:101px;height:39px;line-height:39px;text-align:center;font-size:14px;color:#666;white-space:nowrap">0</div>
<div class="a" style="left:986px;top:680px;width:101px;height:39px;line-height:39px;text-align:center;font-size:14px;color:#666;white-space:nowrap">0</div>
<div class="a" style="left:1087px;top:680px;width:101px;height:39px;line-height:39px;text-align:center;font-size:14px;color:#666;white-space:nowrap">0</div>
<div class="a" style="left:220px;top:719px;width:181px;height:39px;line-height:39px;text-align:center;font-size:14px;color:#666;white-space:nowrap">XF16220908922470400</div>
<div class="a" style="left:401px;top:719px;width:161px;height:39px;line-height:39px;text-align:center;font-size:14px;color:#666;white-space:nowrap">2023-03-04 20:41:51</div>
<div class="a" style="left:562px;top:719px;width:101px;height:39px;line-height:39px;text-align:center;font-size:14px;color:#666;white-space:nowrap">商品消费</div>
<div class="a" style="left:663px;top:719px;width:111px;height:39px;line-height:39px;text-align:center;font-size:14px;color:#666;white-space:nowrap">1883437689q</div>
<div class="a" style="left:774px;top:719px;width:111px;height:39px;line-height:39px;text-align:center;font-size:14px;color:#666;white-space:nowrap">123</div>
<div class="a" style="left:885px;top:719px;width:101px;height:39px;line-height:39px;text-align:center;font-size:14px;color:#666;white-space:nowrap">77</div>
<div class="a" style="left:986px;top:719px;width:101px;height:39px;line-height:39px;text-align:center;font-size:14px;color:#666;white-space:nowrap">0</div>
<div class="a" style="left:1087px;top:719px;width:101px;height:39px;line-height:39px;text-align:center;font-size:14px;color:#666;white-space:nowrap">77</div>
<div class="a" style="left:1205px;top:288px;width:6px;height:468px;background:linear-gradient(to right,rgba(0,0,0,0),rgba(0,0,0,0.05))"></div>
<div class="a" style="left:1211px;top:288px;width:122px;height:468px;background:#fff;border-bottom:1px solid #e6e6e6"></div>
<div class="a" style="left:1211px;top:288px;width:121px;height:39px;background:#f2f2f2"></div>
<div class="a" style="left:1211px;top:327px;width:121px;height:39px;background:#fafafa"></div>
<div class="a" style="left:1211px;top:327px;width:122px;height:1px;background:#e6e6e6"></div>
<div class="a" style="left:1211px;top:366px;width:122px;height:1px;background:#e6e6e6"></div>
<div class="a" style="left:1211px;top:405px;width:122px;height:1px;background:#e6e6e6"></div>
<div class="a" style="left:1211px;top:444px;width:122px;height:1px;background:#e6e6e6"></div>
<div class="a" style="left:1211px;top:483px;width:122px;height:1px;background:#e6e6e6"></div>
<div class="a" style="left:1211px;top:522px;width:122px;height:1px;background:#e6e6e6"></div>
<div class="a" style="left:1211px;top:561px;width:122px;height:1px;background:#e6e6e6"></div>
<div class="a" style="left:1211px;top:600px;width:122px;height:1px;background:#e6e6e6"></div>
<div class="a" style="left:1211px;top:639px;width:122px;height:1px;background:#e6e6e6"></div>
<div class="a" style="left:1211px;top:678px;width:122px;height:1px;background:#e6e6e6"></div>
<div class="a" style="left:1211px;top:717px;width:122px;height:1px;background:#e6e6e6"></div>
<div class="a" style="left:1211px;top:756px;width:122px;height:1px;background:#e6e6e6"></div>
<div class="a" style="left:1211px;top:288px;width:122px;height:1px;background:#e6e6e6"></div>
<div class="a" style="left:1332px;top:288px;width:1px;height:470px;background:#e6e6e6"></div>
<div class="a" style="left:1211px;top:288px;width:1px;height:468px;background:#e6e6e6"></div>
<div class="a" style="left:1211px;top:290px;width:121px;height:39px;line-height:39px;text-align:center;font-size:14px;color:#666;white-space:nowrap">操作</div>
<div class="a btn1" style="left:1223px;top:337px">详情</div>
<div class="a btn2" style="left:1273px;top:337px">重打印</div>
<div class="a btn1" style="left:1223px;top:376px">详情</div>
<div class="a btn2" style="left:1273px;top:376px">重打印</div>
<div class="a btn1" style="left:1223px;top:415px">详情</div>
<div class="a btn2" style="left:1273px;top:415px">重打印</div>
<div class="a btn1" style="left:1223px;top:454px">详情</div>
<div class="a btn2" style="left:1273px;top:454px">重打印</div>
<div class="a btn1" style="left:1223px;top:493px">详情</div>
<div class="a btn2" style="left:1273px;top:493px">重打印</div>
<div class="a btn1" style="left:1223px;top:532px">详情</div>
<div class="a btn2" style="left:1273px;top:532px">重打印</div>
<div class="a btn1" style="left:1223px;top:571px">详情</div>
<div class="a btn2" style="left:1273px;top:571px">重打印</div>
<div class="a btn1" style="left:1223px;top:610px">详情</div>
<div class="a btn2" style="left:1273px;top:610px">重打印</div>
<div class="a btn1" style="left:1223px;top:649px">详情</div>
<div class="a btn2" style="left:1273px;top:649px">重打印</div>
<div class="a btn1" style="left:1223px;top:688px">详情</div>
<div class="a btn2" style="left:1273px;top:688px">重打印</div>
<div class="a btn1" style="left:1223px;top:727px">详情</div>
<div class="a btn2" style="left:1273px;top:727px">重打印</div>
<div class="a" style="left:1343px;top:105px;width:13px;height:653px;background:#f0f0f0"></div>
<div class="a" style="left:1343px;top:105px;width:13px;height:13px;background:#e8e8e8"></div>
<div class="a" style="left:1345px;top:110px;width:0;height:0;border-left:4.5px solid transparent;border-right:4.5px solid transparent;border-bottom:4.5px solid #a3a3a3"></div>
<div class="a" style="left:1344px;top:118px;width:10px;height:429px;background:#bebebe"></div>
<div class="a" style="left:1343px;top:745px;width:13px;height:13px;background:#e8e8e8"></div>
<div class="a" style="left:1345px;top:749px;width:0;height:0;border-left:4.5px solid transparent;border-right:4.5px solid transparent;border-top:4.5px solid #000"></div>
</body></html>
